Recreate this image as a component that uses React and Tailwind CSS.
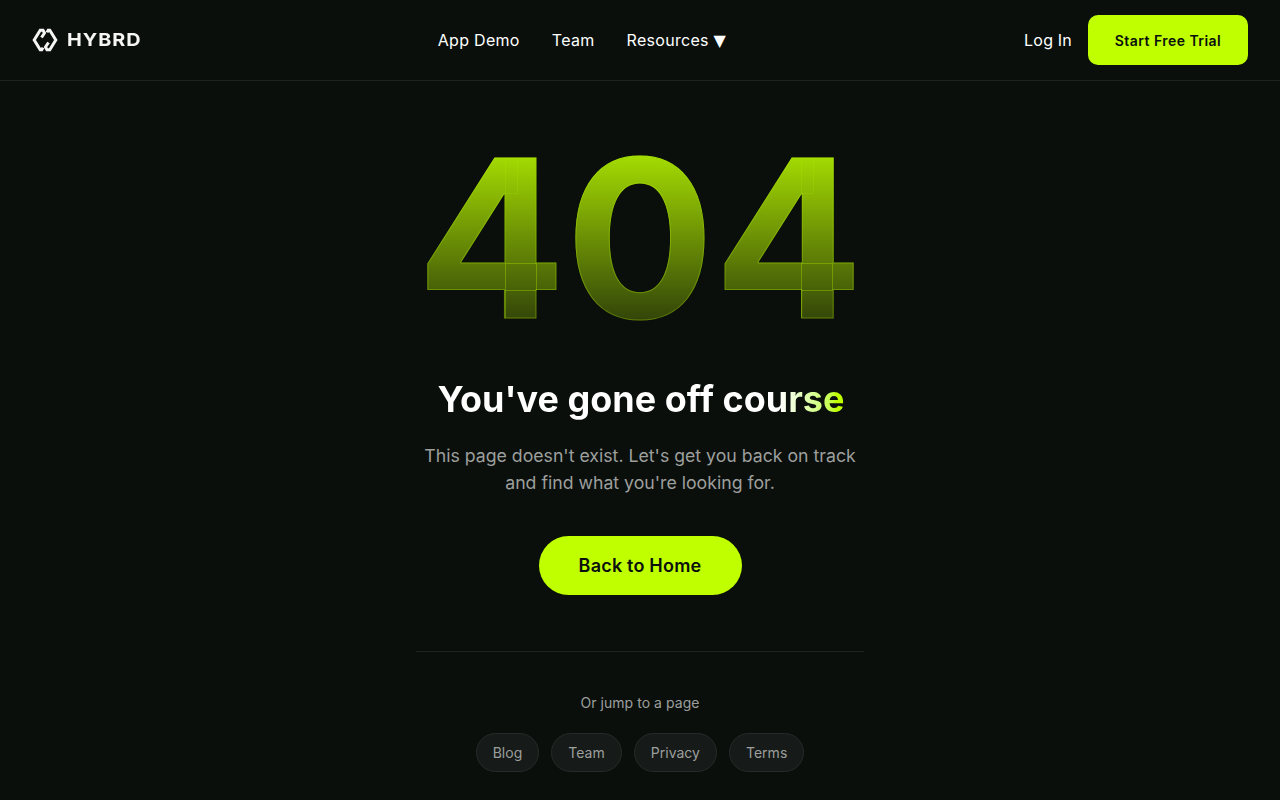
const links = ["Blog", "Team", "Privacy", "Terms"];

function Logo() {
  return (
    <div className="flex items-center gap-[9px]">
      <svg width="26" height="24" viewBox="0 0 26 24" fill="none" stroke="#f5f5f5" strokeWidth="3">
        <path d="M9.5 9.5 L12.5 5 L11 2.2 H8.2 L2.2 12 L8.2 21.8 H9.8 L11 19.6" />
        <path d="M16.5 14.5 L13.5 19 L15 21.8 H17.8 L23.8 12 L17.8 2.2 H16.2 L15 4.4" />
      </svg>
      <span className="mr-[5px] origin-left scale-x-[1.1] text-lg leading-none font-bold tracking-[0.9px] text-[#f5f5f5]">HYBRD</span>
    </div>
  );
}

function Navbar() {
  return (
    <header className="h-[81px] flex items-center justify-between px-8 border-b border-[#1d211f]">
      <Logo />
      <nav className="flex items-center gap-8 text-base tracking-[0.3px] text-white">
        <a>App Demo</a>
        <a>Team</a>
        <a>Resources <span className="font-['DejaVu_Sans']">▼</span></a>
      </nav>
      <div className="flex items-center gap-4">
        <a className="text-base tracking-[0.2px] text-white">Log In</a>
        <button className="w-40 h-[50px] pt-0.5 rounded-[10px] bg-[#bfff00] text-sm font-semibold tracking-[0.45px] text-[#0a0f0d]">Start Free Trial</button>
      </div>
    </header>
  );
}

// the font's overlapping contours show through the stroke, drawn by hand here
function Overlaps() {
  return (
    <svg className="absolute left-1/2 top-0 -translate-x-1/2" width="440" height="241" viewBox="420 117 440 241" fill="none" stroke="#bfff00" strokeOpacity="0.3">
      {[0, 296].map((dx) => (
        <g key={dx} transform={`translate(${dx} 0)`}>
          <path d="M505.5 158 V193.5 H517.5 V158" strokeOpacity="0.14" />
          <path d="M505.5 263.5 H536.5 V290 M505.5 263.5 V318 M505.5 290.5 H536.5" />
        </g>
      ))}
    </svg>
  );
}

export default function App() {
  return (
    <div className="h-[800px] overflow-hidden bg-[#0a0f0c] font-['Inter',sans-serif]">
      <Navbar />
      <main className="flex flex-col items-center">
        <div className="relative mt-[36px] h-[241px]">
          <div className="text-[220px] leading-[1.1] font-bold bg-gradient-to-b from-[#bfff00] to-[#bfff00]/[0.08] bg-clip-text text-transparent [-webkit-text-stroke:1px_rgba(191,255,0,0.3)]">404</div>
          <Overlaps />
        </div>
        <h1 className="mt-[19px] ml-0.5 text-4xl leading-[44px] font-bold bg-gradient-to-r from-white from-[84%] to-[#bfff00] to-[98%] bg-clip-text text-transparent">You've gone off course</h1>
        <p className="mt-[21px] w-[448px] text-center text-[17.7px] leading-[27px] text-[#9d9f9d]">This page doesn't exist. Let's get you back on track and find what you're looking for.</p>
        <button className="mt-[40px] h-[59px] w-[203px] rounded-full bg-[#bfff00] text-lg font-semibold tracking-[0.2px] text-[#0a0f0d]">Back to Home</button>
        <div className="mt-[56px] w-[448px] border-t border-[#1f2422]" />
        <p className="mt-[41px] text-sm leading-5 tracking-[0.05px] text-[#9d9f9d]">Or jump to a page</p>
        <div className="mt-5 flex gap-3">
          {links.map((l) => (
            <a key={l} className="h-[39px] px-4 flex items-center rounded-full border border-[#262b29] bg-[#161a18] text-sm tracking-[0.02px] text-[#9d9f9d]">{l}</a>
          ))}
        </div>
      </main>
    </div>
  );
}
